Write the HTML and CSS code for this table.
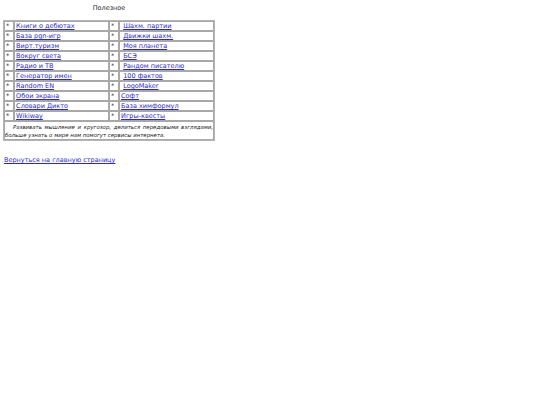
FILE: index.html
```html
<!DOCTYPE html>
<html>
<head>
<meta charset="utf-8">
<link rel="stylesheet" href="styles.css">
</head>
<body>
<div class="wrap">
  <div class="title">Полезное</div>
  <table class="links">
    <tr><td class="b">*</td><td class="l"><a href="#">Книги о дебютах</a></td><td class="b">*</td><td class="l">&nbsp;<a href="#">Шахм. партии</a></td></tr>
    <tr><td class="b">*</td><td class="l"><a href="#">База pgn-игр</a></td><td class="b">*</td><td class="l">&nbsp;<a href="#">Движки шахм.</a></td></tr>
    <tr><td class="b">*</td><td class="l"><a href="#">Вирт.туризм</a></td><td class="b">*</td><td class="l">&nbsp;<a href="#">Моя планета</a></td></tr>
    <tr><td class="b">*</td><td class="l"><a href="#">Вокруг света</a></td><td class="b">*</td><td class="l">&nbsp;<a href="#">БСЭ</a></td></tr>
    <tr><td class="b">*</td><td class="l"><a href="#">Радио и ТВ</a></td><td class="b">*</td><td class="l">&nbsp;<a href="#">Рандом писателю</a></td></tr>
    <tr><td class="b">*</td><td class="l"><a href="#">Генератор имен</a></td><td class="b">*</td><td class="l">&nbsp;<a href="#">100 фактов</a></td></tr>
    <tr><td class="b">*</td><td class="l"><a href="#">Random EN</a></td><td class="b">*</td><td class="l">&nbsp;<a href="#">LogoMaker</a></td></tr>
    <tr><td class="b">*</td><td class="l"><a href="#">Обои экрана</a></td><td class="b">*</td><td class="l"><a href="#">Софт</a></td></tr>
    <tr><td class="b">*</td><td class="l"><a href="#">Словари Дикто</a></td><td class="b">*</td><td class="l"><a href="#">База химформул</a></td></tr>
    <tr><td class="b">*</td><td class="l"><a href="#">Wikiway</a></td><td class="b">*</td><td class="l"><a href="#">Игры-квесты</a></td></tr>
    <tr><td class="note" colspan="4">Развивать мышление и кругозор, делиться передовыми взглядами, больше узнать о мире нам помогут сервисы интернета.</td></tr>
  </table>
</div>
<p class="back"><a href="#">Вернуться на главную страницу</a></p>
</body>
</html>
```

FILE: styles.css
```css
body {
  margin: 3px;
  font-family: "DejaVu Sans", Verdana, sans-serif;
  font-size: 6.5px;
  color: #222;
  background: #fff;
}
a { color: #2a2acc; }
.wrap { width: 212px; }
.title {
  text-align: center;
  line-height: 8px;
  padding: 1px 0 8px;
}
.links {
  width: 212px;
  border: 1px solid #b4b4b4;
  border-spacing: 0;
  font-size: 6.5px;
}
.links td {
  border: 1px solid #a8a8a8;
  padding: 0 1px;
  line-height: 8px;
  height: 8px;
}
.links td.b { width: 6px; }
.links td.l { width: 90px; }
.links td.note {
  font-style: italic;
  font-size: 5.4px;
  line-height: 8px;
  text-indent: 8px;
  text-align: justify;
  padding: 1px 0 0;
}
.back {
  margin: 15px 0 0 1px;
  line-height: 8px;
}
```
